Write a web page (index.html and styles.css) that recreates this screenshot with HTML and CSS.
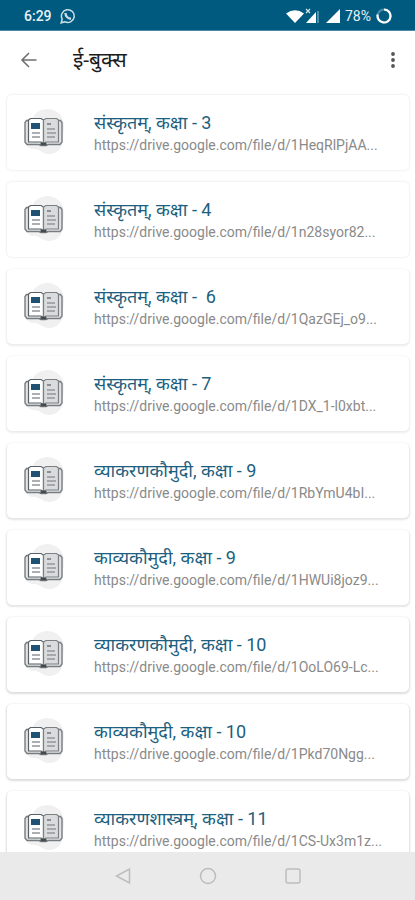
FILE: index.html
```html
<!DOCTYPE html>
<html lang="sa">
<head>
<meta charset="utf-8">
<meta name="viewport" content="width=device-width, initial-scale=1">
<title>ई-बुक्स</title>
<link rel="stylesheet" href="styles.css">
</head>
<body>
<svg class="defs" aria-hidden="true">
  <symbol id="book" viewBox="0 0 44 48">
    <path d="M20 2c8-3 18 1 21 10 2 7 0 13 0 19 0 9-6 15-14 15-7 0-7-4-14-5-6 0-10-3-8-9 2-5 2-7 3-14C9 10 13 4 20 2z" fill="#f0f0f0"/>
    <path d="M7 12.500H4.500l-1.500 2V34l2 2.500H17l2 1h5l2-1h12l2-2.500V14.500l-1.500-2H36" fill="#e2e4e5" stroke="#777c80" stroke-width="1.400"/>
    <path d="M6.500 34V12l2-1.500H19l2.500 1.500v23.500L19 34z" fill="#fff" stroke="#596066" stroke-width="1.200"/>
    <path d="M36.500 34V12l-2-1.500H24L21.500 12v23.500L24 34z" fill="#d9dbdc" stroke="#7b8083" stroke-width="1.200"/>
    <path d="M9 15h9v6H9z" fill="#1f5273"/>
    <path d="M10 25h8M10 29h8M25 21h8M25 25h9M25 29h8" stroke="#92979b" stroke-width="1.400"/>
    <path d="M25 16h4" stroke="#777c80" stroke-width="1.600"/>
    <path d="M18.500 36h6" stroke="#454a4e" stroke-width="2.600"/>
  </symbol>
</svg>
<div class="screen">
  <div class="status">
    <div class="status-group">
      <span>6:29</span>
      <svg width="16" height="16" viewBox="0 0 16 16" fill="none" stroke="#c9e0ea" stroke-width="1.500"><path d="M1.200 14.800l1-3.700a6.400 6.400 0 1 1 2.600 2.600z"/><path d="M5.500 5c0 3 2.500 5.500 5.500 5.800" stroke-width="2.400"/></svg>
    </div>
    <div class="status-group status-right">
      <svg width="36" height="16" viewBox="0 0 36 16"><path d="M1 5.500Q10 -1 19 5.500L10 15z" fill="#fff"/><path d="M21 1l4 4m0-4l-4 4" stroke="#d3e4ec" stroke-width="1.200"/><path d="M21 15L31 4v11z" fill="#fff"/><path d="M33 3v12" stroke="#6fa1b8" stroke-width="1.500"/></svg>
      <svg width="14" height="14" viewBox="0 0 14 14"><path d="M0 14L14 0v14z" fill="#fff"/></svg>
      <span>78%</span>
      <svg width="16" height="16" viewBox="0 0 16 16" fill="none" stroke-width="2.200"><circle cx="8" cy="8" r="6.500" stroke="#4c8ba8"/><path d="M8 1.500A6.500 6.500 0 1 1 1.700 6.500" stroke="#fff"/></svg>
    </div>
  </div>
  <header class="appbar">
    <button class="icon-button" aria-label="Back"><svg width="18" height="18" viewBox="0 0 18 18" fill="none" stroke="#707070" stroke-width="1.600"><path d="M16.500 9H2.500M9 2L2 9l7 7"/></svg></button>
    <h1>ई-बुक्स</h1>
    <button class="icon-button" aria-label="More options"><svg width="6" height="18" viewBox="0 0 6 18" fill="#555"><circle cx="3" cy="3" r="1.900"/><circle cx="3" cy="9" r="1.900"/><circle cx="3" cy="15" r="1.900"/></svg></button>
  </header>
  <main class="content">
    <ul class="list">
      <li><a class="card" href="#"><svg class="book"><use href="#book"/></svg><span class="text"><span class="title">संस्कृतम्, कक्षा - 3</span><span class="url">https://drive.google.com/file/d/1HeqRlPjAA...</span></span></a></li>
      <li><a class="card" href="#"><svg class="book"><use href="#book"/></svg><span class="text"><span class="title">संस्कृतम्, कक्षा - 4</span><span class="url">https://drive.google.com/file/d/1n28syor82...</span></span></a></li>
      <li><a class="card" href="#"><svg class="book"><use href="#book"/></svg><span class="text"><span class="title">संस्कृतम्, कक्षा -&nbsp; 6</span><span class="url">https://drive.google.com/file/d/1QazGEj_o9...</span></span></a></li>
      <li><a class="card" href="#"><svg class="book"><use href="#book"/></svg><span class="text"><span class="title">संस्कृतम्, कक्षा - 7</span><span class="url">https://drive.google.com/file/d/1DX_1-l0xbt...</span></span></a></li>
      <li><a class="card" href="#"><svg class="book"><use href="#book"/></svg><span class="text"><span class="title">व्याकरणकौमुदी, कक्षा - 9</span><span class="url">https://drive.google.com/file/d/1RbYmU4bI...</span></span></a></li>
      <li><a class="card" href="#"><svg class="book"><use href="#book"/></svg><span class="text"><span class="title">काव्यकौमुदी, कक्षा - 9</span><span class="url">https://drive.google.com/file/d/1HWUi8joz9...</span></span></a></li>
      <li><a class="card" href="#"><svg class="book"><use href="#book"/></svg><span class="text"><span class="title">व्याकरणकौमुदी, कक्षा - 10</span><span class="url">https://drive.google.com/file/d/1OoLO69-Lc...</span></span></a></li>
      <li><a class="card" href="#"><svg class="book"><use href="#book"/></svg><span class="text"><span class="title">काव्यकौमुदी, कक्षा - 10</span><span class="url">https://drive.google.com/file/d/1Pkd70Ngg...</span></span></a></li>
      <li><a class="card" href="#"><svg class="book"><use href="#book"/></svg><span class="text"><span class="title">व्याकरणशास्त्रम्, कक्षा - 11</span><span class="url">https://drive.google.com/file/d/1CS-Ux3m1z...</span></span></a></li>
    </ul>
  </main>
  <nav class="navbar">
    <button class="icon-button" aria-label="Back"><svg width="18" height="18" viewBox="0 0 18 18" fill="none" stroke="#bdbdbd" stroke-width="1.500"><path d="M2.500 9L15.500 2v14z"/></svg></button>
    <button class="icon-button" aria-label="Home"><svg width="18" height="18" viewBox="0 0 18 18" fill="none" stroke="#bdbdbd" stroke-width="1.500"><circle cx="9" cy="9" r="7.500"/></svg></button>
    <button class="icon-button" aria-label="Recent apps"><svg width="18" height="18" viewBox="0 0 18 18" fill="none" stroke="#bdbdbd" stroke-width="1.500"><rect x="2" y="2" width="14" height="14" rx="2"/></svg></button>
  </nav>
</div>
</body>
</html>
```
FILE: styles.css
```css
* { box-sizing: border-box; }
body { margin: 0; background: #fff; font-family: Roboto, "Noto Sans", "Noto Sans Devanagari", sans-serif; }
.defs { display: block; width: 0; height: 0; }
.screen { display: flex; flex-direction: column; height: 100vh; }
.status { display: flex; justify-content: space-between; align-items: center; height: 31px; padding: 2px 23px 0 24px; background: #005a80; border-bottom: 1px solid #4a8aa5; color: #e6f2f7; font-size: 14px; font-weight: 500; }
.status-group { display: flex; align-items: center; gap: 8px; }
.status-right { gap: 5px; font-weight: 400; }
.appbar { display: flex; align-items: center; height: 58px; padding: 0 15px 0 16px; }
.icon-button { display: flex; align-items: center; justify-content: center; border: 0; padding: 4px; background: none; }
h1 { flex: 1; margin: 0 0 0 31px; font-size: 21px; line-height: 28px; font-weight: 400; color: #1c1c1c; }
.content { flex: 1; min-height: 0; overflow: hidden; }
.list { display: flex; flex-direction: column; gap: 12px; margin: 0; padding: 6px 6px 12px 7px; list-style: none; }
.card { display: flex; align-items: center; height: 75px; padding: 0 16px 2px 15px; gap: 28px; border-radius: 5px; background: #fff; box-shadow: 0 0 2px 1px #f1f1f1; color: inherit; text-decoration: none; }
.list li:nth-child(n+3) .card { box-shadow: 0 1px 2px 1px #ececec; }
.list li:nth-child(n+5) .card { box-shadow: 0 1px 2px 1px #e5e5e5; }
.list li:nth-child(n+7) .card { box-shadow: 0 1px 2px 1px #dedede; }
.book { flex: none; width: 44px; height: 48px; }
.text { display: flex; flex-direction: column; min-width: 0; white-space: nowrap; }
.title { font-size: 18px; line-height: 26px; color: #1c5f80; }
.url { font-size: 14px; line-height: 18px; color: #8a8a8a; }
.navbar { display: flex; justify-content: center; align-items: center; gap: 59px; height: 48px; background: #eaeaea; }
```
